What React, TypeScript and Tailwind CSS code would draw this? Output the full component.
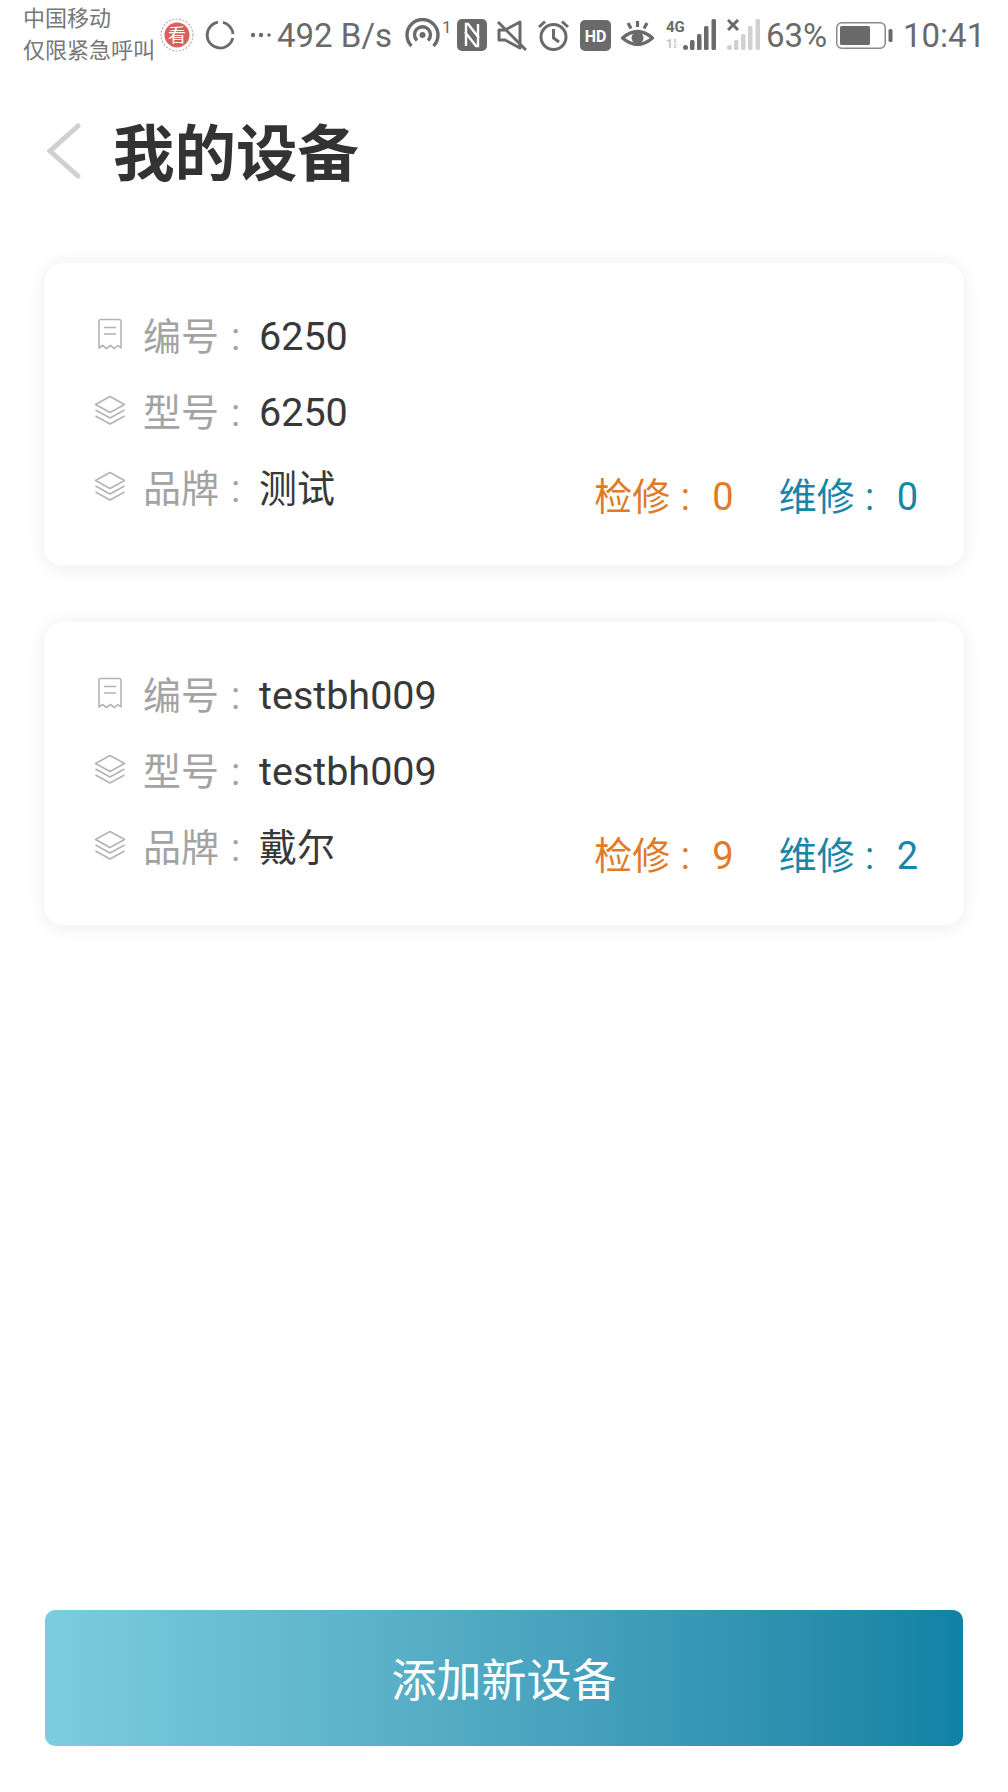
const FONT = "font-['Roboto','Noto_Sans_CJK_SC',sans-serif]";

function ReceiptIcon() {
  return (
    <svg width="26" height="33" viewBox="0 0 26 33" fill="none" stroke="#b3b3b3" strokeWidth="1.6">
      <path d="M2 30V3.5Q2 1.5 4 1.5H22Q24 1.5 24 3.5V30L21 27.5L17.5 30.5L13.5 27.5L9.5 30.5L5.5 27.5Z" strokeLinejoin="round" />
      <path d="M7 9.5H19M7 16H19" />
    </svg>
  );
}

function LayersIcon() {
  return (
    <svg width="32" height="31" viewBox="0 0 32 31" fill="none" stroke="#b3b3b3" strokeWidth="1.5" strokeLinejoin="round">
      <path d="M16 1.5L30.5 9.5L16 17.5L1.5 9.5Z" />
      <path d="M1.5 15L16 23L30.5 15" />
      <path d="M1.5 21L16 29L30.5 21" />
    </svg>
  );
}

function Row({ icon, label, value, small }: { icon: React.ReactNode; label: string; value: string; small?: boolean }) {
  return (
    <div className="flex h-[76px] items-center">
      <div className="mr-[8px] flex w-[51px] justify-center pb-[5px]">{icon}</div>
      <span className="text-[#a3a3a3]">{label}</span>
      <span className="w-[40px] pl-[12px] text-[#a3a3a3]">:</span>
      <span className={small ? "text-[38px] text-[#383838]" : "text-[39.5px] text-[#383838]"}>{value}</span>
    </div>
  );
}

function Count({ label, value, color }: { label: string; value: number; color: string }) {
  return (
    <span className={`flex ${color}`}>
      {label}
      <span className="w-[30px] text-center">:</span>
      <span className="ml-[12px]">{value}</span>
    </span>
  );
}

function DeviceCard({ no, model, brand, check, repair }: { no: string; model: string; brand: string; check: number; repair: number }) {
  return (
    <div className="flex h-[303px] items-end justify-between rounded-[20px] bg-white pt-[36px] pr-[46px] pb-[50px] pl-[40px] text-[38px] leading-none shadow-[0_2px_20px_rgba(0,0,0,0.08)]">
      <div className="mb-[-34px] self-start">
        <Row icon={<ReceiptIcon />} label="编号" value={no} />
        <Row icon={<LayersIcon />} label="型号" value={model} />
        <Row icon={<LayersIcon />} label="品牌" value={brand} small />
      </div>
      <div className="flex gap-[45px]">
        <Count label="检修" value={check} color="text-[#e07b28]" />
        <Count label="维修" value={repair} color="text-[#1a86a6]" />
      </div>
    </div>
  );
}

function StatusBar() {
  const c = "#6a6a6a";
  return (
    <div className="flex h-[70px] items-center pl-[23px] text-[33px] leading-none text-[#6a6a6a]">
      <div className="w-[137px] text-[22px] leading-[32px] text-[#777777]">
        <div>中国移动</div>
        <div>仅限紧急呼叫</div>
      </div>
      <svg width="34" height="34" viewBox="0 0 34 34">
        <circle cx="17" cy="17" r="16" fill="none" stroke="#c9a9b0" strokeWidth="1.2" strokeDasharray="2 1.5" />
        <circle cx="17" cy="17" r="12.5" fill="#d9605c" />
        <text x="17" y="23.5" textAnchor="middle" fontSize="18" fill="#fff" fontFamily="Noto Sans CJK SC">看</text>
      </svg>
      <svg className="ml-[11px]" width="30" height="30" viewBox="0 0 30 30" fill="none" stroke={c} strokeWidth="2.8">
        <path d="M13 2.2A13 13 0 1 0 27.8 18" />
        <path d="M18 2.4A13 13 0 0 1 28 14" />
      </svg>
      <svg className="ml-[15px]" width="22" height="6" viewBox="0 0 22 6" fill={c}>
        <circle cx="3" cy="3" r="2.2" />
        <circle cx="11" cy="3" r="2.2" />
        <circle cx="19" cy="3" r="1.8" />
      </svg>
      <span className="ml-[5px] w-[128px] whitespace-nowrap">492 B/s</span>
      <svg width="36" height="34" viewBox="0 0 36 34" fill="none" stroke={c} strokeWidth="3.4">
        <path d="M6.5 28A15.5 15.5 0 1 1 28.5 28" />
        <path d="M12 22.5A8 8 0 1 1 23 22.5" />
        <circle cx="17.5" cy="17" r="3" fill={c} stroke="none" />
      </svg>
      <span className="mb-[16px] w-[10px] pl-[1px] text-[17px] leading-[20px]">1</span>
      <svg className="ml-[6px]" width="30" height="32" viewBox="0 0 30 32">
        <rect width="30" height="32" rx="5" fill={c} />
        <path d="M9 27V5H11L22 19M21 5V27H19L8 13" fill="none" stroke="#fff" strokeWidth="2.4" />
      </svg>
      <svg className="ml-[10px]" width="30" height="32" viewBox="0 0 30 32" fill="none" stroke={c} strokeWidth="3">
        <path d="M2 11V21H8L23 29V3L8 11Z" strokeLinejoin="round" />
        <path d="M1 3L29 31" />
      </svg>
      <svg className="ml-[10px]" width="33" height="33" viewBox="0 0 33 33" fill="none" stroke={c} strokeWidth="3">
        <circle cx="16.5" cy="18" r="12.5" />
        <path d="M16.5 10V19L22 23" />
        <path d="M2 8L8 2.5M31 8L25 2.5" />
      </svg>
      <svg className="ml-[10px]" width="31" height="31" viewBox="0 0 31 31">
        <rect width="31" height="31" rx="5" fill={c} />
        <text x="15.5" y="21.5" textAnchor="middle" fontSize="16" fontWeight="700" fill="#fff" fontFamily="Roboto">HD</text>
      </svg>
      <svg className="ml-[10px]" width="33" height="30" viewBox="0 0 33 30" fill="none" stroke={c} strokeWidth="3.2">
        <path d="M1.5 18Q16.5 5 31.5 18Q16.5 31 1.5 18Z" />
        <circle cx="16.5" cy="18" r="6" fill={c} stroke="none" />
        <path d="M16.5 1V7M7 3L10 8.5M26 3L23 8.5" />
      </svg>
      <div className="relative ml-[12px] h-[32px] w-[50px]">
        <span className="absolute top-[1px] left-0 text-[15px] font-bold text-[#6a6a6a]">4G</span>
        <span className="absolute top-[19px] left-0 text-[12px] font-bold text-[#c4c4c4]">1⁞</span>
        <svg className="absolute top-0 left-0" width="50" height="32" viewBox="0 0 50 32" fill={c}>
          <circle cx="19.5" cy="28.5" r="2.5" />
          <rect x="24" y="21" width="4.5" height="10" rx="1.5" />
          <rect x="31" y="15" width="4.5" height="16" rx="1.5" />
          <rect x="38" y="7" width="4.5" height="24" rx="1.5" />
          <rect x="45.5" y="0" width="4.5" height="31" rx="1.5" />
        </svg>
      </div>
      <svg className="ml-[11px]" width="33" height="32" viewBox="0 0 33 32">
        <path d="M1 1L11 11M11 1L1 11" stroke={c} strokeWidth="3" />
        <g fill="#d0d0d0">
          <circle cx="2.5" cy="28.5" r="2.5" />
          <rect x="7" y="21" width="4.5" height="10" rx="1.5" />
          <rect x="14" y="15" width="4.5" height="16" rx="1.5" />
          <rect x="21" y="7" width="4.5" height="24" rx="1.5" />
          <rect x="28.5" y="0" width="4.5" height="31" rx="1.5" />
        </g>
      </svg>
      <span className="ml-[6px] w-[70px]">63%</span>
      <svg width="57" height="27" viewBox="0 0 57 27">
        <rect x="0.75" y="0.75" width="48.5" height="25.5" rx="5" fill="none" stroke="#8a8a8a" strokeWidth="1.5" />
        <rect x="4" y="4" width="30" height="19" rx="1.5" fill={c} />
        <rect x="52.5" y="7" width="4" height="13" rx="1.5" fill={c} />
      </svg>
      <span className="ml-[10px]">10:41</span>
    </div>
  );
}

export default function App() {
  return (
    <div className={`flex h-[1792px] w-[1008px] flex-col overflow-hidden bg-white ${FONT}`}>
      <StatusBar />
      <div className="flex h-[168px] items-center pl-[47px]">
        <svg className="mb-[6px]" width="34" height="56" viewBox="0 0 34 56" fill="none" stroke="#d0d0d0" strokeWidth="5" strokeLinecap="round">
          <path d="M31 3L3 28L31 53" />
        </svg>
        <h1 className="mt-[3px] ml-[32px] text-[61.5px] leading-none font-bold text-[#333333]">我的设备</h1>
      </div>
      <div className="mt-[25px] flex flex-col gap-[56px] px-[44px]">
        <DeviceCard no="6250" model="6250" brand="测试" check={0} repair={0} />
        <DeviceCard no="testbh009" model="testbh009" brand="戴尔" check={9} repair={2} />
      </div>
      <button className="mx-[45px] mt-auto mb-[46px] h-[136px] rounded-[10px] bg-gradient-to-r from-[#7ccddd] to-[#0f82a5] pt-[6px] text-[45px] leading-none text-white">
        添加新设备
      </button>
    </div>
  );
}
